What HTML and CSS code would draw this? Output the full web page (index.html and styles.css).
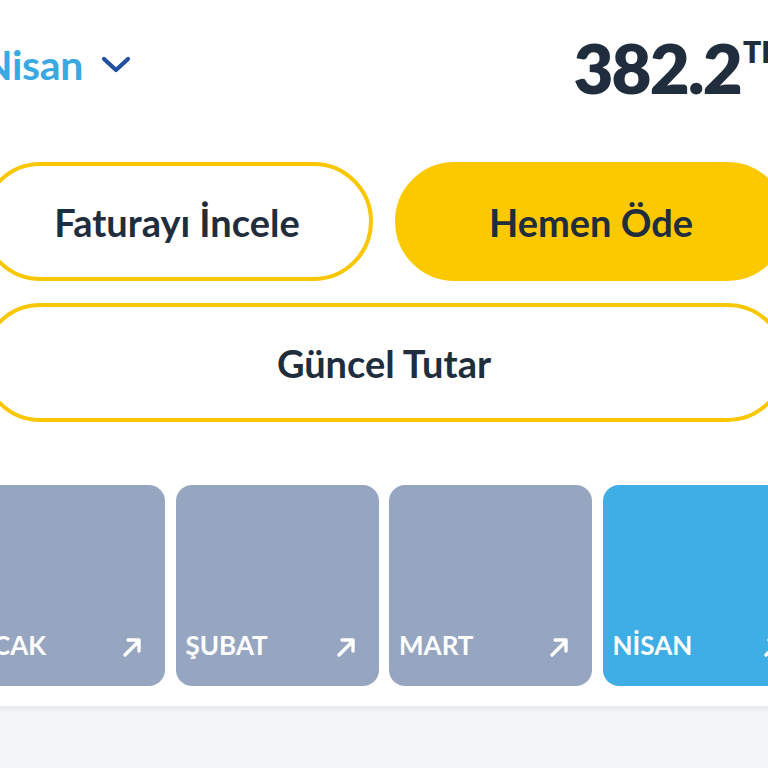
FILE: index.html
```html
<!DOCTYPE html>
<html lang="tr">
<head>
<meta charset="utf-8">
<title>Fatura</title>
<link rel="stylesheet" href="styles.css">
</head>
<body>
<div class="page">
  <div class="panel">
    <header class="head">
      <button class="month-select">
        <span class="month-name">Nisan</span>
        <svg class="chev" width="30" height="20" viewBox="0 0 30 20"><path d="M3 4 L15 15 L27 4" fill="none" stroke="#22509f" stroke-width="4.2" stroke-linecap="round" stroke-linejoin="round"/></svg>
      </button>
      <div class="amount"><span class="num">382.2</span><span class="cur">TL</span></div>
    </header>

    <div class="actions">
      <button class="btn btn-outline">Faturayı İncele</button>
      <button class="btn btn-fill">Hemen Öde</button>
      <button class="btn btn-outline btn-wide">Güncel Tutar</button>
    </div>

    <div class="months">
      <div class="card"><span class="card-label">OCAK</span><svg class="arr" width="22" height="22" viewBox="0 0 22 22"><path d="M4 19 L18 5 M7 4 H18 V15" fill="none" stroke="#fff" stroke-width="3.4" stroke-linecap="round" stroke-linejoin="round"/></svg></div>
      <div class="card"><span class="card-label">ŞUBAT</span><svg class="arr" width="22" height="22" viewBox="0 0 22 22"><path d="M4 19 L18 5 M7 4 H18 V15" fill="none" stroke="#fff" stroke-width="3.4" stroke-linecap="round" stroke-linejoin="round"/></svg></div>
      <div class="card"><span class="card-label">MART</span><svg class="arr" width="22" height="22" viewBox="0 0 22 22"><path d="M4 19 L18 5 M7 4 H18 V15" fill="none" stroke="#fff" stroke-width="3.4" stroke-linecap="round" stroke-linejoin="round"/></svg></div>
      <div class="card card-active"><span class="card-label">NİSAN</span><svg class="arr" width="22" height="22" viewBox="0 0 22 22"><path d="M4 19 L18 5 M7 4 H18 V15" fill="none" stroke="#fff" stroke-width="3.4" stroke-linecap="round" stroke-linejoin="round"/></svg></div>
    </div>
  </div>
  <div class="below"></div>
</div>
</body>
</html>
```

FILE: styles.css
```css
* { box-sizing: border-box; }
html, body { margin: 0; padding: 0; }
body {
  width: 768px;
  height: 768px;
  overflow: hidden;
  background: #f4f5f7;
  font-family: Lato, "Open Sans", sans-serif;
  color: #1f2d3d;
}
.page { width: 768px; overflow: hidden; }
.panel {
  background: #fff;
  width: 806px;
  margin-left: -19px;
  height: 706px;
  position: relative;
  z-index: 1;
  box-shadow: 0 2px 6px rgba(30, 40, 60, 0.08);
}
.head {
  height: 130px;
  display: flex;
  justify-content: space-between;
  align-items: center;
  padding-right: 10px;
}
.month-select {
  display: flex;
  align-items: center;
  gap: 18px;
  border: 0;
  background: none;
  padding: 0;
  font-family: inherit;
  margin-top: -2px;
}
.month-name {
  font-size: 41px;
  font-weight: 700;
  color: #3aa8e1;
  letter-spacing: -0.3px;
}
.chev { margin-top: 2px; }
.amount {
  display: flex;
  align-items: flex-start;
  margin-top: 4px;
}
.num {
  font-size: 69px;
  font-weight: 800;
  letter-spacing: -1.8px;
  line-height: 1;
}
.cur {
  font-size: 30px;
  font-weight: 800;
  line-height: 1;
  margin-left: 2px;
  margin-top: 3px;
}
.actions {
  margin-top: 32px;
  display: grid;
  grid-template-columns: 1fr 1fr;
  gap: 22px;
}
.btn {
  height: 119px;
  border-radius: 60px;
  font-family: inherit;
  font-size: 38px;
  font-weight: 700;
  color: #1f2d3d;
  cursor: pointer;
  padding: 0;
}
.btn-outline { background: #fff; border: 4px solid #f8c700; }
.btn-fill { background: #fcc800; border: 4px solid #fcc800; }
.btn-wide { grid-column: 1 / span 2; }
.months {
  margin-top: 63px;
  margin-left: -19px;
  display: flex;
  gap: 10.5px;
}
.card {
  flex: 0 0 203px;
  height: 201px;
  border-radius: 16px;
  background: #97a6c0;
  display: flex;
  align-items: flex-end;
  justify-content: space-between;
  padding: 0 22px 28px 10px;
}
.card-active { background: #3eaee5; }
.card-label {
  color: #fff;
  font-size: 26px;
  font-weight: 700;
  line-height: 1;
}
.below { height: 62px; }
```
